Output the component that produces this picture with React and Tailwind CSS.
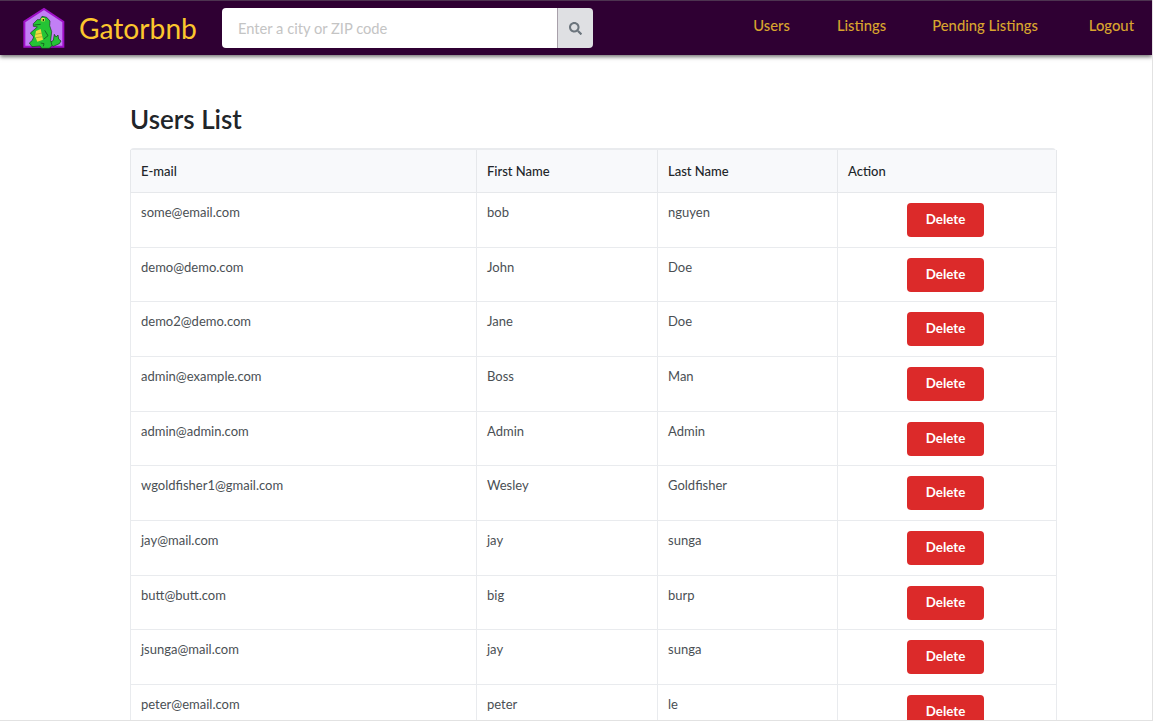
import React from 'react';
import { FaSearch } from 'react-icons/fa';

const users = [
    { email: 'some@email.com', first: 'bob', last: 'nguyen' },
    { email: 'demo@demo.com', first: 'John', last: 'Doe' },
    { email: 'demo2@demo.com', first: 'Jane', last: 'Doe' },
    { email: 'admin@example.com', first: 'Boss', last: 'Man' },
    { email: 'admin@admin.com', first: 'Admin', last: 'Admin' },
    { email: 'wgoldfisher1@gmail.com', first: 'Wesley', last: 'Goldfisher' },
    { email: 'jay@mail.com', first: 'jay', last: 'sunga' },
    { email: 'butt@butt.com', first: 'big', last: 'burp' },
    { email: 'jsunga@mail.com', first: 'jay', last: 'sunga' },
    { email: 'peter@email.com', first: 'peter', last: 'le' },
];

const links = [
    { label: 'Users', className: 'ml-0' },
    { label: 'Listings', className: 'ml-[47px]' },
    { label: 'Pending Listings', className: 'ml-[46px]' },
    { label: 'Logout', className: 'ml-[51px]' },
];

// viewBox is 3x the pixel grid of the logo
function Logo() {
    return (
        <svg width="42" height="42" viewBox="69 18 126 126" className="shrink-0">
            <path d="M73 62 L132 24 L190 62 V137 H73 Z" fill="#c27ff5" stroke="#a010c8" strokeWidth="6" />
            {/* tail */}
            <path d="M145 128 L160 118 L163 100 L168 108 L174 102 L176 114 L183 120 L178 128 L160 136 Z" fill="#25c435" stroke="#123a16" strokeWidth="2" />
            {/* body and head */}
            <path
                d="M100 68 L112 56 L120 56 L126 46 L140 49 L150 60 L149 74 L155 92 L152 118 L156 134 L148 142 L125 142 L120 135 L96 137 L88 126 L97 118 L101 108 L91 96 L105 84 L112 78 L100 76 Z"
                fill="#25c435"
                stroke="#123a16"
                strokeWidth="2"
            />
            <path d="M108 90 L122 84 L129 116 L112 122 L105 106 Z" fill="#efdc3e" />
            <path d="M107 100 L126 96 M108 110 L128 107" stroke="#9a9a2a" strokeWidth="2" />
            <path d="M134 88 L144 104 L132 114" fill="none" stroke="#123a16" strokeWidth="2" />
            <path d="M122 126 L132 128 L130 136" fill="none" stroke="#123a16" strokeWidth="2" />
            <path d="M124 51 H134 V61 H124 Z" fill="#f5e04a" />
            <path d="M128 54 H132 V60 H128 Z" fill="#143c14" />
            <path d="M103 72 L122 70" stroke="#123a16" strokeWidth="2" />
        </svg>
    );
}

function App() {
    return (
        <div className="h-[721px] w-[1153px] overflow-hidden bg-white border-r border-b border-[#e2e2e2] font-['Lato',sans-serif]">
            <nav className="relative z-10 flex h-[55px] items-center border-t border-[#4d3350] bg-[#2f0033] pl-[23px] pr-[18px] shadow-[0_2px_4px_rgba(0,0,0,0.55)]">
                <Logo />
                <span className="ml-[14px] text-[28.2px] leading-none text-[#fcc62d]">Gatorbnb</span>
                <div className="ml-[25px] flex h-10 w-[371px]">
                    <input
                        placeholder="Enter a city or ZIP code"
                        className="h-full w-[335px] rounded-l bg-white px-[16px] text-[14.7px] text-[#495057] outline-none placeholder:text-[#c4c4c4]"
                    />
                    <button className="flex h-full w-9 items-center justify-center rounded-r border-l border-[#a8a0aa] bg-[#dfe0e3] text-[#6c757d]">
                        <FaSearch className="h-[13px] w-[13px]" />
                    </button>
                </div>
                <div className="ml-auto flex items-center pb-[6px] text-[14.8px] font-medium text-[#d8a42e]">
                    {links.map((link) => (
                        <a key={link.label} className={link.className}>{link.label}</a>
                    ))}
                </div>
            </nav>

            <main className="w-[926px] ml-[130px]">
                <h1 className="mt-[47px] mb-3 text-[26px] leading-[34px] font-semibold text-[#212529]">Users List</h1>
                <div className="rounded border-t-2 border-[#e9ebee]">
                    <table className="w-[926px] table-fixed border-collapse text-[13px] text-[#212529]">
                        <colgroup>
                            <col className="w-[346px]" />
                            <col className="w-[181px]" />
                            <col className="w-[180px]" />
                            <col className="w-[219px]" />
                        </colgroup>
                        <thead>
                            <tr className="h-[42.5px] bg-[#f8f9fb]">
                                <th className="border-x border-b border-[#e6e8eb] px-[10px] pt-[1px] text-left font-medium">E-mail</th>
                                <th className="border-x border-b border-[#e6e8eb] px-[10px] pt-[1px] text-left font-medium">First Name</th>
                                <th className="border-x border-b border-[#e6e8eb] px-[10px] pt-[1px] text-left font-medium">Last Name</th>
                                <th className="border-x border-b border-[#e6e8eb] px-[10px] pt-[1px] text-left font-medium">Action</th>
                            </tr>
                        </thead>
                        <tbody>
                            {users.map((user) => (
                                <tr key={user.email} className="h-[54.67px] text-[#4a4f54]">
                                    <td className="border border-[#e9ebee] px-[10px] pt-[9px] align-top leading-5">{user.email}</td>
                                    <td className="border border-[#e9ebee] px-[10px] pt-[9px] align-top leading-5">{user.first}</td>
                                    <td className="border border-[#e9ebee] px-[10px] pt-[9px] align-top leading-5">{user.last}</td>
                                    <td className="border border-[#e9ebee] px-[10px] pt-[10px] align-top">
                                        <button className="ml-[59px] block h-[34px] w-[77px] rounded bg-[#dc2a2a] text-[13.33px] font-bold text-white">Delete</button>
                                    </td>
                                </tr>
                            ))}
                        </tbody>
                    </table>
                </div>
            </main>
        </div>
    );
}

export default App;
